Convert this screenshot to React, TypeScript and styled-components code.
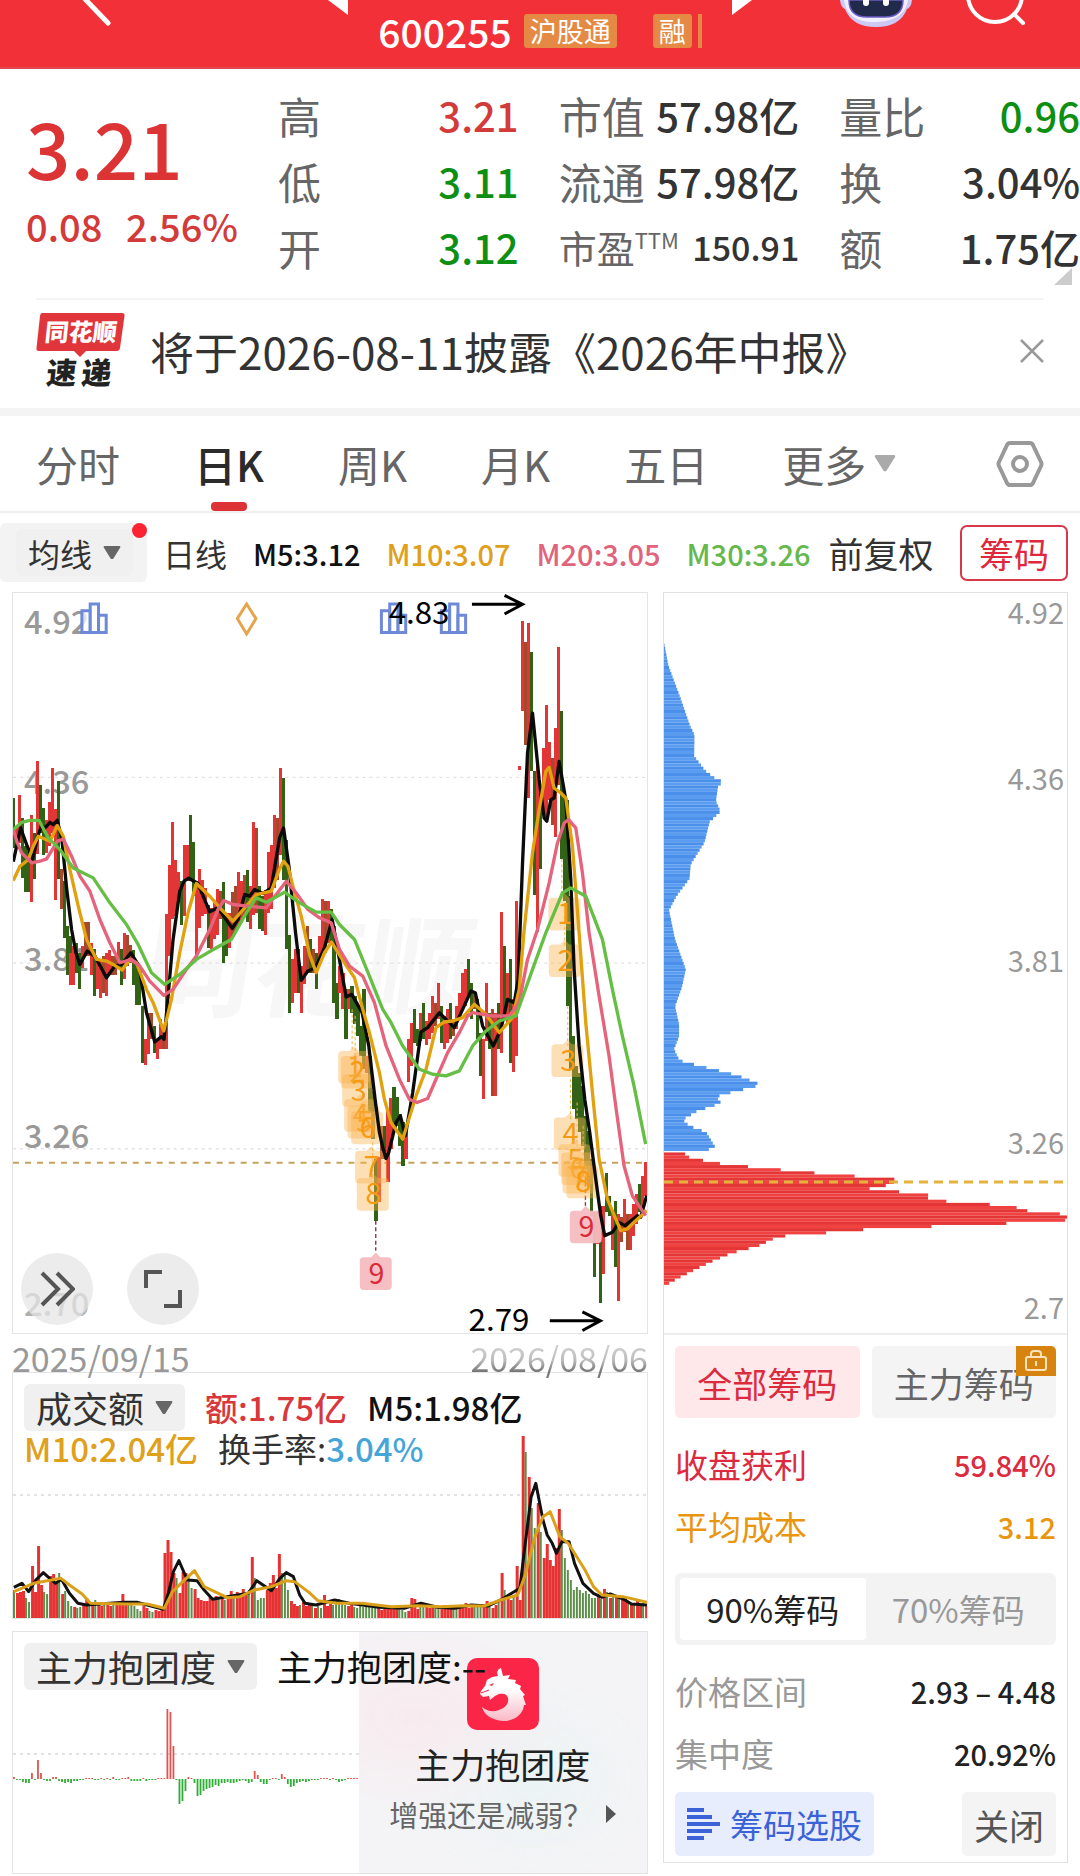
import React, { useState } from "react";
import styled, { createGlobalStyle } from "styled-components";

const GlobalStyle = createGlobalStyle`
  * {
    box-sizing: border-box;
  }

  body {
    margin: 0;
    background: #fff;
    color: #333;
    font-family: "Noto Sans CJK SC", "Noto Sans", sans-serif;
  }

  button, select {
    font-family: inherit;
    border: 0;
    padding: 0;
    margin: 0;
    background: none;
    color: inherit;
    cursor: pointer;
  }

  svg {
    display: block;
  }
`;

type Point = [number, number];
type Candle = [number, number, number, "r" | "g" | "m"];

const RED = "#e23535";
const GREEN = "#316216";
const CANDLE_COLORS = { r: RED, g: GREEN, m: "#a5492c" };

/* ---------- data ---------- */

// x, high, low, direction
const candles: Candle[] = [
  [36, 656, 805, "g"], [45, 740, 800, "r"], [54, 647, 790, "r"], [63, 715, 895, "g"], [72, 800, 937, "g"],
  [81, 815, 937, "g"], [90, 707, 966, "r"], [99, 760, 897, "g"], [108, 545, 822, "r"], [117, 615, 760, "g"],
  [126, 686, 826, "g"], [135, 722, 820, "r"], [144, 668, 800, "r"], [153, 566, 760, "r"], [162, 687, 962, "r"],
  [171, 605, 897, "g"], [180, 868, 988, "m"], [189, 905, 1077, "g"], [198, 1040, 1188, "g"], [207, 1070, 1190, "g"],
  [208, 1120, 1218, "r"], [217, 1100, 1218, "r"], [226, 1090, 1180, "g"], [235, 1120, 1228, "g"], [244, 1100, 1167, "r"],
  [253, 1027, 1130, "m"], [262, 1027, 1130, "m"], [271, 1090, 1187, "r"], [280, 1110, 1249, "g"], [289, 1140, 1230, "r"],
  [298, 1140, 1257, "r"], [307, 1130, 1240, "m"], [316, 1120, 1249, "r"], [325, 1112, 1187, "r"], [334, 1130, 1187, "m"],
  [343, 1130, 1187, "m"], [352, 1088, 1165, "r"], [361, 1110, 1218, "g"], [370, 1060, 1200, "r"], [379, 1068, 1160, "m"],
  [388, 1097, 1150, "m"], [397, 1112, 1218, "g"], [406, 1150, 1278, "g"], [415, 1160, 1278, "g"], [424, 1280, 1450, "g"],
  [433, 1380, 1458, "r"], [442, 1300, 1425, "r"], [451, 1300, 1380, "m"], [460, 1340, 1420, "g"], [469, 1380, 1440, "r"],
  [478, 1320, 1410, "r"], [487, 1340, 1410, "m"], [495, 1005, 1410, "r"], [504, 855, 1130, "r"], [513, 728, 1020, "r"],
  [522, 840, 1010, "r"], [531, 878, 960, "r"], [540, 905, 1038, "g"], [549, 797, 1010, "r"], [558, 797, 905, "r"],
  [567, 707, 905, "g"], [576, 788, 950, "g"], [585, 905, 1135, "r"], [594, 868, 1045, "r"], [603, 900, 1010, "r"],
  [612, 925, 1005, "r"], [621, 975, 1105, "g"], [630, 985, 1110, "r"], [639, 970, 1080, "r"], [648, 928, 1068, "r"],
  [657, 935, 1020, "m"], [666, 908, 1150, "g"], [675, 1000, 1130, "g"], [684, 1000, 1105, "r"], [693, 938, 1077, "m"],
  [702, 918, 1058, "m"], [711, 878, 1040, "r"], [720, 905, 1030, "r"], [729, 885, 1010, "m"], [738, 870, 1028, "g"],
  [747, 920, 1048, "r"], [756, 728, 1008, "r"], [765, 745, 1000, "m"], [774, 920, 1048, "g"], [783, 950, 1055, "g"],
  [792, 930, 1068, "r"], [801, 818, 1000, "r"], [810, 797, 990, "r"], [819, 707, 925, "r"], [828, 715, 900, "m"],
  [837, 566, 825, "r"], [846, 596, 900, "g"], [855, 780, 1108, "g"], [864, 1068, 1300, "g"], [873, 1140, 1270, "r"],
  [882, 1108, 1240, "r"], [891, 1110, 1240, "g"], [900, 1160, 1300, "r"], [909, 1100, 1215, "r"], [918, 1040, 1180, "m"],
  [927, 1080, 1180, "g"], [936, 1108, 1180, "m"], [945, 1120, 1228, "g"], [954, 1070, 1150, "r"], [963, 958, 1130, "r"],
  [972, 965, 1120, "m"], [981, 965, 1090, "r"], [990, 990, 1090, "g"], [999, 1040, 1270, "g"], [1008, 1210, 1320, "g"],
  [1017, 1160, 1240, "r"], [1026, 1180, 1288, "r"], [1035, 1230, 1380, "g"], [1044, 1230, 1288, "r"], [1053, 1220, 1300, "g"],
  [1062, 1250, 1335, "g"], [1071, 1280, 1370, "g"], [1080, 1340, 1430, "g"], [1089, 1228, 1470, "g"], [1098, 1430, 1480, "r"],
  [1107, 1430, 1600, "g"], [1116, 1535, 1680, "g"], [1125, 1740, 1925, "g"], [1134, 1735, 1870, "r"], [1143, 1640, 1740, "m"],
  [1152, 1640, 1740, "g"], [1161, 1590, 1810, "r"], [1170, 1555, 1710, "r"], [1179, 1522, 1640, "g"], [1188, 1552, 1640, "g"],
  [1197, 1605, 1700, "g"], [1206, 1630, 1760, "g"], [1215, 1655, 1740, "r"], [1223, 1380, 1508, "r"], [1232, 1330, 1460, "r"],
  [1241, 1290, 1390, "g"], [1250, 1350, 1400, "g"], [1259, 1300, 1385, "r"], [1268, 1270, 1380, "g"], [1277, 1325, 1397, "r"],
  [1286, 1300, 1380, "r"], [1295, 1250, 1360, "r"], [1304, 1270, 1340, "m"], [1313, 1210, 1320, "r"], [1322, 1280, 1390, "g"],
  [1331, 1310, 1410, "r"], [1340, 1290, 1390, "r"], [1349, 1270, 1380, "g"], [1358, 1320, 1370, "m"], [1367, 1280, 1350, "r"],
  [1376, 1240, 1320, "r"], [1385, 1180, 1290, "r"], [1394, 1168, 1280, "r"], [1403, 1138, 1250, "g"], [1412, 1210, 1320, "g"],
  [1421, 1240, 1290, "m"], [1430, 1260, 1380, "g"], [1439, 1360, 1490, "g"], [1448, 1380, 1560, "r"], [1457, 1210, 1385, "r"],
  [1466, 1300, 1410, "g"], [1475, 1290, 1550, "m"], [1484, 1300, 1550, "r"], [1493, 1270, 1410, "g"], [1502, 997, 1420, "r"],
  [1511, 1100, 1320, "g"], [1520, 1180, 1330, "r"], [1529, 1140, 1450, "g"], [1538, 1260, 1478, "r"], [1547, 963, 1430, "r"],
  [1556, 560, 570, "r"], [1565, 123, 393, "r"], [1574, 185, 495, "m"], [1583, 128, 655, "r"], [1592, 215, 575, "g"],
  [1601, 575, 945, "g"], [1610, 545, 1058, "r"], [1619, 640, 868, "g"], [1628, 505, 700, "r"], [1637, 375, 720, "r"],
  [1646, 486, 660, "r"], [1655, 535, 735, "m"], [1664, 445, 773, "r"], [1673, 202, 615, "r"], [1682, 395, 838, "g"],
  [1691, 640, 965, "g"], [1700, 660, 1280, "g"], [1709, 950, 1470, "g"], [1718, 1370, 1590, "g"], [1727, 1460, 1620, "g"],
  [1736, 1480, 1660, "g"], [1745, 1520, 1700, "g"], [1754, 1610, 1770, "g"], [1763, 1655, 1820, "g"], [1772, 1740, 1910, "g"],
  [1781, 1900, 2095, "g"], [1790, 1900, 1995, "r"], [1799, 1880, 2172, "g"], [1808, 1880, 2085, "r"], [1817, 1782, 1900, "g"],
  [1826, 1850, 1910, "g"], [1835, 1900, 2012, "r"], [1844, 1865, 2065, "g"], [1853, 1905, 2165, "r"], [1862, 1915, 1990, "m"],
  [1871, 1860, 1960, "r"], [1880, 1905, 2012, "m"], [1889, 1905, 2012, "r"], [1898, 1875, 1970, "r"], [1907, 1845, 1935, "r"],
  [1916, 1815, 1900, "g"], [1925, 1790, 1900, "r"], [1934, 1750, 1850, "r"],
];

const priceLines = [
  {
    color: "#0b0b0b",
    points:
      "40,846 52,790 62,745 80,795 98,838 115,765 125,738 135,745 150,728 160,735 172,722 186,780 200,925 215,1050 228,1120 240,1155 262,1115 285,1130 320,1195 345,1160 365,1155 393,1120 418,1160 440,1300 465,1388 485,1372 493,1380 505,1250 520,1080 540,935 553,905 567,896 595,912 630,997 655,985 698,1047 715,1020 735,945 750,950 765,930 790,942 815,925 840,775 852,745 868,860 888,1060 905,1203 925,1175 948,1165 975,1105 998,1020 1010,1085 1040,1253 1057,1245 1088,1300 1108,1400 1127,1560 1140,1660 1150,1705 1160,1738 1168,1720 1190,1630 1203,1610 1218,1670 1240,1540 1265,1358 1285,1345 1320,1300 1365,1345 1390,1290 1415,1235 1428,1240 1450,1340 1482,1400 1505,1350 1525,1260 1545,1270 1557,1200 1570,850 1585,520 1600,400 1620,600 1635,715 1643,725 1655,660 1665,655 1680,545 1700,660 1715,900 1725,1170 1740,1400 1757,1560 1772,1660 1790,1800 1805,1910 1817,1970 1840,1960 1860,1930 1878,1940 1915,1910 1925,1915 1943,1850",
  },
  {
    color: "#e2a10e",
    points:
      "40,903 60,860 85,840 100,800 115,770 150,785 172,738 190,770 210,870 235,980 260,1080 290,1140 320,1145 340,1155 367,1172 390,1140 410,1150 440,1230 460,1270 492,1355 515,1260 540,1120 565,1000 590,912 630,950 665,990 700,1025 740,980 770,945 815,935 840,868 852,845 865,860 880,920 905,1010 930,1125 950,1180 975,1120 996,1088 1035,1150 1065,1195 1090,1290 1110,1360 1140,1480 1155,1560 1175,1630 1210,1680 1250,1550 1280,1470 1310,1345 1335,1328 1360,1325 1390,1315 1425,1275 1460,1305 1500,1360 1540,1315 1560,1230 1575,1050 1600,820 1620,690 1640,575 1650,563 1665,625 1685,640 1700,655 1720,800 1740,1060 1760,1330 1782,1560 1800,1740 1825,1860 1865,1955 1885,1950 1910,1925 1943,1895",
  },
  {
    color: "#e5647c",
    points:
      "40,750 52,790 65,820 95,850 120,845 140,838 172,785 190,778 215,830 240,890 270,935 300,1020 330,1090 360,1150 395,1140 420,1160 450,1205 492,1248 520,1230 560,1170 590,1130 630,1050 655,990 672,963 700,975 745,980 800,985 860,905 890,940 925,990 960,1015 995,1030 1020,1110 1050,1160 1090,1190 1125,1270 1160,1400 1200,1500 1230,1560 1253,1570 1285,1558 1310,1500 1345,1420 1380,1360 1405,1310 1420,1300 1480,1310 1530,1310 1560,1270 1585,1140 1615,1050 1650,910 1675,790 1695,730 1708,720 1730,745 1750,880 1770,1060 1800,1250 1830,1430 1850,1580 1875,1760 1900,1850 1940,1910",
  },
  {
    color: "#66bf45",
    points:
      "40,750 65,728 90,722 117,722 145,775 180,810 220,865 280,895 330,970 380,1035 415,1095 455,1180 495,1215 540,1185 590,1140 650,1105 695,1080 740,1000 770,955 800,968 855,938 900,970 950,998 995,998 1020,1035 1065,1080 1110,1190 1150,1290 1175,1330 1210,1400 1260,1470 1300,1485 1340,1490 1380,1475 1420,1400 1460,1355 1500,1325 1550,1310 1600,1170 1640,1060 1690,940 1715,925 1760,950 1810,1080 1840,1230 1870,1370 1905,1520 1940,1695",
  },
];

const axisLabels: { text: string; y: number; faded?: boolean }[] = [
  { text: "4.92", y: 162 },
  { text: "4.36", y: 643 },
  { text: "3.81", y: 1174 },
  { text: "3.26", y: 1707 },
  { text: "2.70", y: 2210, faded: true },
];

const turnMarks: [number, number, string][] = [
  [1064, 1460, "1"], [1072, 1475, "2"], [1076, 1530, "3"], [1082, 1605, "4"], [1092, 1625, "5"],
  [1103, 1642, "6"], [1115, 1760, "7"], [1120, 1842, "8"], [1696, 1000, "1"], [1697, 1140, "2"],
  [1705, 1440, "3"], [1712, 1660, "4"], [1726, 1740, "5"], [1734, 1765, "6"], [1738, 1790, "7"], [1750, 1805, "8"],
];

const turnover =
  "28g 25r 26r 27r 20g 16g 52r 26r 72r 33r 26g 24g 42r 44r 35r 45g 24r 27g 17g 12g 11r 10g 11g 14r 20r 15g 13r 18g 13r 12r 14g 16r 12r 13g 15r 13r 24r 14r 13g 15g 12g 9g 7g 12r 10r 7g 6g 8r 7r 9r 65r 78r 66r 45r 40g 25r 46r 45r 41g 30g 29r 20r 18r 17r 17r 21r 20r 22r 21g 24r 18g 19r 27r 22g 26r 22r 29r 25r 28g 61r 40g 18g 20g 20g 28r 35r 43r 30r 64r 45g 45g 28g 17r 14r 12r 13g 16r 12r 13r 14g 10r 12g 10g 23r 12r 14r 13g 16g 19g 14g 13g 12r 14r 11g 10g 12g 11g 13g 15g 10g 12g 11r 8r 9r 13r 9r 12r 11r 9g 8g 6g 7r 20r 19r 9r 12g 15g 14r 10r 13r 11g 12g 11r 13r 10r 9r 11g 10g 12r 13r 15r 10r 12r 13g 14g 11g 12r 17r 14g 10r 13r 16g 45r 28g 20r 18r 22g 52r 18r 182r 166g 141r 110g 90g 115r 86g 60r 74r 58r 52r 70r 109r 88g 60g 48g 38g 28g 31g 28g 25g 27g 24g 20g 20g 23r 19g 29r 26g 20r 22g 21r 22g 18r 21r 16g 14r 15g 17r 13r 15g 14r"
    .split(" ")
    .map((v) => ({ height: parseInt(v, 10), up: v.endsWith("r") }));

const turnoverLines = [
  {
    color: "#111",
    points:
      "33,652 52,640 68,665 85,630 103,608 118,625 132,640 146,628 165,670 185,700 205,705 260,700 295,697 325,697 388,718 400,670 412,605 425,572 445,630 468,632 485,660 505,688 540,680 590,670 610,632 645,662 665,625 680,608 697,620 712,675 725,700 750,705 795,690 830,700 900,712 960,715 1000,700 1040,712 1080,715 1120,705 1160,708 1190,690 1235,655 1248,520 1262,380 1273,340 1290,450 1300,495 1312,520 1322,550 1335,515 1352,515 1365,580 1385,640 1410,670 1430,682 1450,672 1485,690 1500,702 1537,705",
  },
  {
    color: "#dba01a",
    points:
      "33,665 80,640 145,625 165,645 195,672 215,700 300,702 350,702 390,715 410,665 430,640 462,602 485,650 540,683 570,680 605,660 645,650 680,632 700,635 735,668 755,692 800,700 860,700 930,710 990,707 1050,710 1100,707 1150,708 1190,690 1230,675 1248,615 1270,505 1290,440 1307,425 1330,500 1350,520 1390,600 1410,650 1430,675 1480,680 1537,697",
  },
];

const clusterFlow = [
  2, -1, -1, -3, -4, -4, 6, -1, 19, 6, -1, -2, -2, 2, 2, -2, -3, -4, -3, -4, -2, -2, -1, -1, 1, 1, 1, -1, -1, 1, -1, 1,
  -1, 2, -1, -1, 1, 1, 2, -2, -2, -2, -2, 1, -2, -1, -1, -1, 1, 1, 1, 70, 67, 33, -1, -25, -22, -12, 2, 1, -4, -17, -16,
  -12, -10, -9, -8, -6, -7, -4, -4, -3, -4, -4, -3, -2, -1, -2, -4, -3, 8, 4, -3, -5, -5, -1, 1, 1, -1, 5, 2, -5, -8,
  -7, -4, -3, -2, -3, -2, -1, -1, -1, 1, 1, 1, -1, 1, -1, -3, -2, -1, 1, 1, 1, 1,
];

const trappedProfile: Point[] = [
  [0, 127], [13, 175], [48, 240], [78, 300], [91, 318], [90, 362], [123, 392], [153, 408], [180, 416], [162, 422],
  [155, 455], [169, 476], [136, 498], [121, 540], [80, 585], [76, 615], [38, 650], [15, 680], [33, 740], [65, 802],
  [53, 840], [33, 878], [45, 915], [45, 940], [30, 967], [45, 988], [63, 994], [103, 1000], [140, 1007], [176, 1013],
  [214, 1020], [240, 1026], [264, 1033], [290, 1040], [256, 1047], [223, 1052], [190, 1058], [156, 1065], [171, 1078],
  [140, 1085], [98, 1095], [56, 1112], [76, 1125], [126, 1138], [154, 1170], [108, 1178],
];

const profitProfile: Point[] = [
  [63, 1183], [76, 1190], [123, 1197], [171, 1203], [264, 1210], [356, 1216], [449, 1222], [578, 1229], [706, 1236],
  [662, 1248], [610, 1255], [717, 1262], [795, 1268], [787, 1275], [848, 1281], [993, 1288], [1058, 1294], [1089, 1301],
  [1190, 1307], [1209, 1314], [1194, 1321], [953, 1328], [747, 1334], [564, 1340], [462, 1347], [342, 1353], [298, 1367],
  [280, 1373], [203, 1387], [138, 1406], [103, 1418], [45, 1438], [4, 1454],
];

// one horizontal bar for every price step of the profile
const toBars = (profile: Point[]) => {
  const bars: { y: number; width: number }[] = [];
  let k = 0;
  for (let y = profile[0][1]; y <= profile[profile.length - 1][1]; y += 6.5) {
    while (k < profile.length - 2 && profile[k + 1][1] <= y) k++;
    const [x0, y0] = profile[k];
    const [x1, y1] = profile[k + 1];
    const t = Math.min(1, (y - y0) / (y1 - y0));
    bars.push({ y, width: x0 + (x1 - x0) * t });
  }
  return bars;
};

/* ---------- header ---------- */

const Header = styled.header`
  display: grid;
  grid-template-columns: 1fr auto 1fr;
  align-items: start;
  height: 69px;
  overflow: hidden;
  background: #f13038;
  border-bottom: 2px solid #de4a50;
`;

const HeaderSide = styled.div<{ $end?: boolean }>`
  display: flex;
  align-items: flex-start;
  justify-content: ${(props) => (props.$end ? "flex-end" : "flex-start")};
  gap: 54px;
  padding: ${(props) => (props.$end ? "0 54px 0 0" : "0 0 0 80px")};
`;

const StockSwitch = styled.div`
  display: flex;
  align-items: flex-start;
  gap: 30px;
`;

const StockCode = styled.div`
  display: flex;
  align-items: center;
  gap: 12px;
  height: 62px;
  color: #fff;
  font-size: 39px;
  font-weight: 500;
  line-height: 48px;
`;

const MarketTag = styled.span<{ $last?: boolean }>`
  padding: 0 6px;
  margin-left: ${(props) => (props.$last ? "24px" : "0")};
  border-radius: 3px;
  background: #e58a45;
  font-size: 27px;
  font-weight: 400;
  line-height: 34px;
`;

const TagSliver = styled.span`
  width: 4px;
  height: 34px;
  margin-left: -6px;
  background: #e58a45;
`;

/* ---------- quote ---------- */

const Quote = styled.section`
  position: relative;
  display: grid;
  grid-template-columns: 212px 1fr 1fr 1fr;
  column-gap: 40px;
  padding: 13px 0 18px 26px;
`;

const PriceBlock = styled.div`
  padding-top: 20px;
  color: #dc3434;
`;

const LastPrice = styled.div`
  font-size: 78px;
  font-weight: 500;
  line-height: 88px;
`;

const Change = styled.div`
  display: flex;
  justify-content: space-between;
  margin-top: 11px;
  font-size: 38px;
  font-weight: 500;
  line-height: 50px;
  color: #d33a3a;
`;

const StatList = styled.dl`
  margin: 0;
`;

const Stat = styled.div`
  display: flex;
  align-items: center;
  justify-content: space-between;
  height: 66px;
  white-space: nowrap;
`;

const StatName = styled.dt<{ $small?: boolean }>`
  display: flex;
  color: #666;
  font-size: ${(props) => (props.$small ? "38px" : "43px")};
  line-height: 60px;

  sup {
    font-size: 22px;
    line-height: 44px;
  }
`;

const StatValue = styled.dd<{ $tone?: string; $small?: boolean }>`
  margin: 0;
  color: ${(props) => props.$tone || "#333"};
  font-size: ${(props) => (props.$small ? "34px" : "40px")};
  font-weight: 500;
  line-height: 60px;
`;

const CornerMark = styled.svg`
  position: absolute;
  right: 8px;
  bottom: 13px;
`;

/* ---------- news ---------- */

const News = styled.section`
  display: flex;
  align-items: center;
  height: 110px;
  margin: 0 36px;
  padding-bottom: 6px;
  border-top: 2px solid #f4f4f4;
`;

const NewsText = styled.a`
  flex: 1;
  margin-left: 24px;
  color: #333;
  font-size: 44px;
  line-height: 60px;
  text-decoration: none;
  white-space: nowrap;
`;

const Band = styled.div`
  height: 8px;
  background: #f4f4f4;
`;

/* ---------- tabs ---------- */

const Tabs = styled.nav`
  display: flex;
  align-items: center;
  gap: 74px;
  height: 97px;
  padding: 0 36px;
  border-bottom: 2px solid #f0f0f0;
`;

const Tab = styled.button<{ $active?: boolean }>`
  position: relative;
  display: flex;
  align-items: center;
  gap: 8px;
  height: 95px;
  color: ${(props) => (props.$active ? "#2b2b2b" : "#666")};
  font-size: 42px;
  font-weight: ${(props) => (props.$active ? 500 : 400)};
  white-space: nowrap;

  &::after {
    content: "";
    display: ${(props) => (props.$active ? "block" : "none")};
    position: absolute;
    left: 50%;
    bottom: 0;
    width: 36px;
    height: 9px;
    margin-left: -18px;
    border-radius: 4px;
    background: #dd3236;
  }
`;

const SettingsButton = styled.button`
  margin-left: auto;
`;

/* ---------- averages ---------- */

const AverageBar = styled.div`
  display: flex;
  align-items: center;
  height: 79px;
  padding-right: 12px;
  white-space: nowrap;
`;

const AverageChip = styled.div`
  position: relative;
  padding: 6px 14px 6px 16px;
  border-radius: 6px;
  background: #f3f3f3;
`;

const RedDot = styled.span`
  position: absolute;
  top: 0;
  right: 0;
  width: 15px;
  height: 15px;
  border-radius: 50%;
  background: #fb2334;
`;

const SelectBox = styled.label`
  display: inline-flex;
  align-items: center;
  gap: 10px;
  height: 47px;
  padding: 0 12px;
  border-radius: 6px;
  background: #f0f0f0;
`;

const Select = styled.select<{ $size: number }>`
  appearance: none;
  outline: none;
  color: #333;
  font-size: ${(props) => props.$size}px;
  line-height: 46px;
`;

const Legend = styled.div`
  display: flex;
  align-items: center;
  gap: 26px;
  margin: 0 18px 0 16px;
  font-size: 29px;
  font-weight: 500;
`;

const LegendItem = styled.span<{ $color: string }>`
  color: ${(props) => props.$color};
`;

const PeriodName = styled.span`
  color: #333;
  font-size: 32px;
  font-weight: 400;
`;

const AdjustMode = styled.button`
  color: #333;
  font-size: 35px;
`;

const ChipToggle = styled.button`
  height: 56px;
  margin-left: auto;
  padding: 0 17px;
  border: 2px solid #d8384c;
  border-radius: 7px;
  color: #e0283c;
  font-size: 35px;
  line-height: 50px;
`;

/* ---------- charts ---------- */

const Charts = styled.main`
  display: grid;
  grid-template-columns: minmax(0, 636fr) minmax(0, 405fr);
  column-gap: 15px;
  align-items: start;
  padding: 0 12px 3px;
`;

const Panel = styled.section`
  display: grid;
  border: 1px solid #e4e4e4;

  > * {
    grid-area: 1 / 1;
  }
`;

const Drawing = styled.svg`
  width: 100%;
  height: auto;
  font-family: "Noto Sans CJK SC", sans-serif;
`;

const ChartTools = styled.div`
  display: flex;
  align-self: end;
  gap: 34px;
  padding: 0 0 8px 8px;
  z-index: 1;
`;

const RoundButton = styled.button`
  display: grid;
  place-items: center;
  width: 72px;
  height: 72px;
  border-radius: 50%;
  background: rgba(228, 228, 228, 0.72);
`;

const DateAxis = styled.div`
  display: flex;
  justify-content: space-between;
  height: 38px;
  color: #999;
  font-size: 34px;
  line-height: 48px;
`;

const EndDate = styled.span`
  height: 48px;
  color: #777;
  mask-image: linear-gradient(to bottom, rgba(0, 0, 0, 0.35) 28%, rgba(0, 0, 0, 0.5) 55%, #000 78%);
`;

const Indicator = styled.div`
  display: flex;
  flex-wrap: wrap;
  align-content: flex-start;
  align-items: center;
  column-gap: 20px;
  padding: 11px 11px 0;
  z-index: 1;
  font-size: 33px;
  line-height: 34px;
  white-space: nowrap;
`;

const IndicatorValue = styled.span<{ $color?: string }>`
  color: ${(props) => props.$color || "#111"};
  font-weight: 500;

  em {
    color: #333;
    font-style: normal;
    font-weight: 400;
  }
`;

const ClusterTitle = styled.span`
  color: #111;
  font-size: 35px;
`;

const ClusterPanel = styled(Panel)`
  margin-top: 12px;
`;

const Promo = styled.a`
  display: flex;
  flex-direction: column;
  align-items: center;
  justify-self: end;
  width: 45.5%;
  padding-top: 26px;
  background:
    radial-gradient(ellipse at 20% 35%, rgba(250, 230, 235, 0.7), transparent 45%),
    radial-gradient(ellipse at 60% 62%, rgba(232, 243, 243, 0.7), transparent 50%),
    #f4f4f6;
  color: #222;
  text-decoration: none;
  white-space: nowrap;
`;

const PromoTitle = styled.strong`
  margin-top: 11px;
  font-size: 35px;
  font-weight: 400;
  line-height: 46px;
`;

const PromoNote = styled.span`
  display: flex;
  align-items: center;
  gap: 14px;
  margin-top: 7px;
  color: #666;
  font-size: 29px;
  line-height: 40px;
`;

/* ---------- chip distribution ---------- */

const ChipColumn = styled.aside`
  border: 1px solid #e0e0e0;
`;

const ChipDetails = styled.div`
  padding: 11px 11px 6px;
  border-top: 2px solid #eee;
`;

const ChipTabs = styled.div`
  display: grid;
  grid-template-columns: 1fr 1fr;
  gap: 12px;
  margin-bottom: 15px;
`;

const ChipTab = styled.button<{ $active?: boolean }>`
  position: relative;
  height: 72px;
  border-radius: 5px;
  background: ${(props) => (props.$active ? "#fee8ea" : "#f4f4f4")};
  color: ${(props) => (props.$active ? "#dc2a3f" : "#666")};
  font-size: 35px;
`;

const LockBadge = styled.span`
  position: absolute;
  top: 0;
  right: 0;
  display: grid;
  place-items: center;
  width: 40px;
  height: 30px;
  border-radius: 0 5px 0 0;
  background: #d6830f;
`;

const Facts = styled.dl`
  margin: 0;
`;

const Fact = styled.div<{ $color?: string }>`
  display: flex;
  align-items: center;
  justify-content: space-between;
  height: 62px;
  color: ${(props) => props.$color || "#999"};

  dt {
    font-size: 33px;
  }

  dd {
    margin: 0;
    color: ${(props) => props.$color || "#222"};
    font-size: 29px;
    font-weight: 500;
  }
`;

const Segment = styled.div`
  display: grid;
  grid-template-columns: 1fr 1fr;
  margin: 16px 0 15px;
  padding: 5px;
  border-radius: 6px;
  background: #f3f3f3;
`;

const SegmentButton = styled.button<{ $active: boolean }>`
  height: 62px;
  border-radius: 4px;
  background: ${(props) => (props.$active ? "#fff" : "transparent")};
  color: ${(props) => (props.$active ? "#222" : "#999")};
  font-size: 33px;
`;

const ChipActions = styled.div`
  display: flex;
  justify-content: space-between;
  margin-top: 8px;
`;

const ChipAction = styled.button<{ $primary?: boolean }>`
  display: flex;
  align-items: center;
  gap: 10px;
  height: 64px;
  padding: 0 12px;
  border-radius: 5px;
  background: ${(props) => (props.$primary ? "#e8edfe" : "#f4f4f4")};
  color: ${(props) => (props.$primary ? "#3c62d8" : "#555")};
  font-size: ${(props) => (props.$primary ? "33px" : "35px")};
`;

/* ---------- parts ---------- */

const DownArrow = ({ color = "#666", size = 18 }: { color?: string; size?: number }) => (
  <svg width={size} height={size * 0.75} viewBox="0 0 20 15" aria-hidden="true">
    <path d="M2 0h16q2 0 1 2L11.500 14q-1.500 1.600-3 0L1 2Q0 0 2 0Z" fill={color} />
  </svg>
);

interface DropdownProps {
  label: string;
  value: string;
  size?: number;
}

const Dropdown = ({ label, value, size = 36 }: DropdownProps) => (
  <SelectBox>
    <Select $size={size} aria-label={label} defaultValue={value}>
      <option>{value}</option>
    </Select>
    <DownArrow />
  </SelectBox>
);

const ExpressLogo = () => (
  <svg width="90" height="76" viewBox="0 0 90 76" fontFamily="Noto Sans CJK SC, sans-serif" fontWeight="900">
    <path d="M6 0h80q3 0 2.500 3L84 35q-.5 3-3.500 3H50l-6 6-6-6H3q-3 0-2.500-3L4 3q.4-3 2-3Z" fill="#e0363b" />
    <text x="11" y="28" fontSize="24" fill="#fff" transform="skewX(-6)">同花顺</text>
    <text x="17" y="71" fontSize="30" fill="#222" transform="skewX(-6)">速</text>
    <text x="52" y="71" fontSize="30" fill="#222" transform="skewX(-6)">递</text>
  </svg>
);

const Badge = ({ x, y, text, last }: { x: number; y: number; text: string; last?: boolean }) => (
  <g>
    <path
      d={`M${x - 36} ${y - 45}h22l14-14 14 14h22q12 0 12 12v74q0 12-12 12h-72q-12 0-12-12v-74q0-12 12-12Z`}
      fill={last ? "#f6bcc0" : "#fbb24f"}
      fillOpacity={last ? 0.95 : 0.42}
    />
    <text x={x + 2} y={y + 34} fontSize="86" textAnchor="middle" fill={last ? "#d92c38" : "#f59a12"}>
      {text}
    </text>
  </g>
);

const ReportIcon = ({ x }: { x: number }) => (
  <g fill="#fff" fillOpacity="0.7" stroke="#6d89d8" strokeWidth="9">
    <path d={`M${x + 4} 92h25v66h-25Z`} />
    <path d={`M${x + 29} 72h25v86h-25Z`} />
    <path d={`M${x + 54} 106h23v52h-23Z`} />
  </g>
);

const PriceChart = () => (
  <Drawing viewBox="39 39 1905 2223" role="img" aria-label="日K">
    <text x="420" y="1285" fontSize="330" fontWeight="700" fill="#f7f7f7" transform="translate(200 0) skewX(-9)">
      同花顺
    </text>
    <g stroke="#e2e2e2" strokeWidth="4" strokeDasharray="9 12">
      <path d="M39 593H1944" />
      <path d="M39 1151H1944" />
      <path d="M39 1709H1944" />
    </g>
    <path d="M39 1751H1944" stroke="#c6a35d" strokeWidth="6" strokeDasharray="18 18" />
    {axisLabels.map((label) => (
      <text key={label.text} x="72" y={label.y} fontSize="98" fontWeight="500" fill={label.faded ? "#b0b0b0" : "#999"}>
        {label.text}
      </text>
    ))}
    <ReportIcon x={242} />
    <ReportIcon x={1142} />
    <ReportIcon x={1322} />
    <path d="M741 72l28 44-28 46-28-46Z" fill="none" stroke="#e5a54c" strokeWidth="9" />
    <g shapeRendering="crispEdges">
      {candles.map(([x, high, low, tone]) => (
        <rect key={x} x={x} y={high} width="9.5" height={low - high} fill={CANDLE_COLORS[tone]} />
      ))}
    </g>
    <g stroke="#efb44d" strokeWidth="3" strokeDasharray="9 7">
      <path d="M1058 1290V1410" />
      <path d="M1067 1310V1430" />
      <path d="M1120 1690V1800" />
      <path d="M1688 838V960" />
      <path d="M1697 1010V1100" />
      <path d="M1706 1280V1400" />
      <path d="M1714 1500V1620" />
      <path d="M1734 1570V1700" />
      <path d="M1752 1640V1800" />
    </g>
    <g stroke="#8c2b3a" strokeWidth="4" strokeDasharray="12 8">
      <path d="M1129 1925V2015" />
      <path d="M1759 1770V1880" />
    </g>
    {turnMarks.map(([x, y, text]) => (
      <Badge key={`${x}-${text}`} x={x} y={y} text={text} />
    ))}
    <Badge x={1129} y={2080} text="9" last />
    <Badge x={1760} y={1940} text="9" last />
    {priceLines.map((line) => (
      <polyline key={line.color} points={line.points} fill="none" stroke={line.color} strokeWidth="10" strokeLinejoin="round" />
    ))}
    <g fill="none" stroke="#000" strokeWidth="9">
      <path d="M1418 73h150M1516 46l54 27-54 29" />
      <path d="M1652 2226h150M1750 2199l54 27-54 29" />
    </g>
    <text x="1168" y="132" fontSize="94" fill="#000">4.83</text>
    <text x="1408" y="2256" fontSize="94" fill="#000">2.79</text>
  </Drawing>
);

const TurnoverChart = () => (
  <Drawing viewBox="0 0 634 245" role="img" aria-label="成交额">
    <path d="M0 122H634" stroke="#e2e2e2" strokeWidth="2" strokeDasharray="3 4" />
    {turnover.map((bar, i) => (
      <rect
        key={i}
        x={i * 3.01}
        y={245 - bar.height}
        width={bar.up ? 3 : 2}
        height={bar.height}
        fill={bar.up ? "#e63232" : "#5d8f4b"}
      />
    ))}
    <g transform="translate(-13 -3) scale(0.4209 0.3333)" fill="none">
      {turnoverLines.map((line) => (
        <polyline
          key={line.color}
          points={line.points}
          stroke={line.color}
          strokeWidth="3"
          strokeLinejoin="round"
          vectorEffect="non-scaling-stroke"
        />
      ))}
    </g>
  </Drawing>
);

const ClusterChart = () => (
  <Drawing viewBox="0 0 634 241" role="img" aria-label="主力抱团度">
    <path d="M0 122H346" stroke="#e2e2e2" strokeWidth="2" strokeDasharray="3 4" />
    {clusterFlow.map((value, i) => (
      <rect
        key={i}
        x={i * 3.01}
        y={value > 0 ? 147 - value : 147}
        width="1.8"
        height={Math.abs(value)}
        fill={value > 0 ? "#e0554f" : "#2fae35"}
      />
    ))}
  </Drawing>
);

const profileLabels: [string, number][] = [
  ["4.92", 31], ["4.36", 197], ["3.81", 379], ["3.26", 561], ["2.7", 726],
];

const ChipChart = () => (
  <Drawing viewBox="0 0 403 740" role="img" aria-label="筹码分布">
    <g transform="translate(0 -12.5) scale(0.335 0.4847)">
      {toBars(trappedProfile).map((bar, i) => (
        <rect key={i} y={bar.y - 3} width={bar.width} height="6.6" fill={i % 2 ? "#5a9cf0" : "#4a8fea"} />
      ))}
      {toBars(profitProfile).map((bar, i) => (
        <rect key={i} y={bar.y - 3} width={bar.width} height="6.6" fill={i % 2 ? "#ef4241" : "#e43636"} />
      ))}
    </g>
    <path d="M0 589H400" stroke="#e5b23b" strokeWidth="3" strokeDasharray="9 6" />
    <g fontSize="29" fill="#999" textAnchor="end">
      {profileLabels.map(([text, y]) => (
        <text key={text} x="400" y={y}>{text}</text>
      ))}
    </g>
  </Drawing>
);

const DragonLogo = () => (
  <svg width="72" height="72" viewBox="0 0 72 72">
    <defs>
      <linearGradient id="dragon" x1="0" y1="0" x2="0" y2="1">
        <stop offset="0.4" stopColor="#fff" />
        <stop offset="1" stopColor="#f9b9c6" />
      </linearGradient>
    </defs>
    <rect width="72" height="72" rx="10" fill="#fa2547" />
    <path
      d="M34 10l2 8 7-1-2 4 8 1-1 3 6 3-1 3 5 6-2 1 3 9-2 0C56 57 47 63 36 63 25 62 17 57 15 49c6 5 12 5 17 3 7-2 10-7 9-12-1-4-4-5-9-4l-4 2-5 4-1-4-6 1-3-3 1-3 4-5 2-6 5-3 6-1c-2-4 0-7 3-8Z"
      fill="url(#dragon)"
    />
    <path d="M22 27l5-2-2 3Z" fill="#fa2547" />
    <path d="M14 35l8-3" stroke="#fa2547" strokeWidth="1" />
  </svg>
);

const LockIcon = () => (
  <svg width="24" height="22" viewBox="0 0 24 22" fill="none" stroke="#fbe3bd" strokeWidth="2">
    <rect x="2" y="7" width="20" height="13" rx="2" />
    <path d="M7 7V4q0-3 3-3h4q3 0 3 3v3M12 11v5" />
  </svg>
);

const averages = [
  { text: "M5:3.12", color: "#111" },
  { text: "M10:3.07", color: "#dfa01c" },
  { text: "M20:3.05", color: "#e0647c" },
  { text: "M30:3.26", color: "#66b84c" },
];

const periods = ["分时", "日K", "周K", "月K", "五日"];

const UP = "#d33a3a";
const DOWN = "#0c8f12";

const App = () => {
  const [period, setPeriod] = useState("日K");
  const [range, setRange] = useState("90%筹码");

  return (
    <>
      <GlobalStyle />
      <Header>
        <HeaderSide>
          <button aria-label="返回">
            <svg width="34" height="28" viewBox="0 0 34 28">
              <path d="M4-2l24 25" stroke="#fff" strokeWidth="5" strokeLinecap="round" />
            </svg>
          </button>
        </HeaderSide>
        <StockSwitch>
          <button aria-label="上一只">
            <svg width="20" height="15" viewBox="0 0 20 15"><path d="M0 0h20v15Z" fill="#fff" /></svg>
          </button>
          <StockCode>
            600255
            <MarketTag>沪股通</MarketTag>
            <MarketTag $last>融</MarketTag>
            <TagSliver />
          </StockCode>
          <button aria-label="下一只">
            <svg width="20" height="15" viewBox="0 0 20 15"><path d="M0 0h20L0 15Z" fill="#fff" /></svg>
          </button>
        </StockSwitch>
        <HeaderSide $end>
          <button aria-label="智能助手">
            <svg width="72" height="28" viewBox="0 0 72 28">
              <path d="M0 0h72q-1 8-5 9-7 18-31 18T5 9Q1 8 0 0Z" fill="#cdc9f4" />
              <path d="M4 0h64q-3 21-32 22T4 0Z" fill="#f0effc" />
              <path d="M9 0h54q0 17-18 17H27Q9 17 9 0Z" fill="#222a4c" stroke="#6a5bc4" strokeWidth="1.500" />
              <path d="M26-2v5M46-2v5" stroke="#fff" strokeWidth="6" strokeLinecap="round" />
            </svg>
          </button>
          <button aria-label="搜索">
            <svg width="60" height="28" viewBox="0 0 60 28" fill="none" stroke="#fff" strokeWidth="4">
              <circle cx="29" cy="-5" r="27" />
              <path d="M48 14l9 9" strokeLinecap="round" />
            </svg>
          </button>
        </HeaderSide>
      </Header>

      <Quote>
        <PriceBlock>
          <LastPrice>3.21</LastPrice>
          <Change>
            <span>0.08</span>
            <span>2.56%</span>
          </Change>
        </PriceBlock>
        <StatList>
          <Stat><StatName>高</StatName><StatValue $tone={UP}>3.21</StatValue></Stat>
          <Stat><StatName>低</StatName><StatValue $tone={DOWN}>3.11</StatValue></Stat>
          <Stat><StatName>开</StatName><StatValue $tone={DOWN}>3.12</StatValue></Stat>
        </StatList>
        <StatList>
          <Stat><StatName>市值</StatName><StatValue>57.98亿</StatValue></Stat>
          <Stat><StatName>流通</StatName><StatValue>57.98亿</StatValue></Stat>
          <Stat><StatName $small>市盈<sup>TTM</sup></StatName><StatValue $small>150.91</StatValue></Stat>
        </StatList>
        <StatList>
          <Stat><StatName>量比</StatName><StatValue $tone={DOWN}>0.96</StatValue></Stat>
          <Stat><StatName>换</StatName><StatValue>3.04%</StatValue></Stat>
          <Stat><StatName>额</StatName><StatValue>1.75亿</StatValue></Stat>
        </StatList>
        <CornerMark width="18" height="17" viewBox="0 0 18 17"><path d="M18 0v17H0Z" fill="#ccc" /></CornerMark>
      </Quote>

      <News>
        <ExpressLogo />
        <NewsText href="#news">将于2026-08-11披露《2026年中报》</NewsText>
        <button aria-label="关闭公告">
          <svg width="24" height="24" viewBox="0 0 24 24"><path d="M1 1l22 22M23 1L1 23" stroke="#999" strokeWidth="2.500" /></svg>
        </button>
      </News>
      <Band />

      <Tabs>
        {periods.map((name) => (
          <Tab key={name} $active={name === period} onClick={() => setPeriod(name)}>{name}</Tab>
        ))}
        <Tab>更多<DownArrow color="#aaa" size={22} /></Tab>
        <SettingsButton aria-label="设置">
          <svg width="48" height="46" viewBox="0 0 48 46" fill="none" stroke="#999" strokeWidth="4">
            <path d="M14 2h20q2 0 3 2l8 17q1 2 0 4l-8 17q-1 2-3 2H14q-2 0-3-2L3 25q-1-2 0-4l8-17q1-2 3-2Z" />
            <circle cx="24" cy="23" r="7" />
          </svg>
        </SettingsButton>
      </Tabs>

      <AverageBar>
        <AverageChip>
          <Dropdown label="主图指标" value="均线" size={32} />
          <RedDot />
        </AverageChip>
        <Legend>
          <PeriodName>日线</PeriodName>
          {averages.map((item) => (
            <LegendItem key={item.text} $color={item.color}>{item.text}</LegendItem>
          ))}
        </Legend>
        <AdjustMode>前复权</AdjustMode>
        <ChipToggle>筹码</ChipToggle>
      </AverageBar>

      <Charts>
        <div>
          <Panel>
            <PriceChart />
            <ChartTools>
              <RoundButton aria-label="展开">
                <svg width="36" height="36" viewBox="0 0 36 36" fill="none" stroke="#555" strokeWidth="4">
                  <path d="M3 2l16 16L3 34M18 2l16 16L18 34" />
                </svg>
              </RoundButton>
              <RoundButton aria-label="全屏">
                <svg width="38" height="38" viewBox="0 0 38 38" fill="none" stroke="#555" strokeWidth="4">
                  <path d="M2 18V2h16M36 20v16H20" />
                </svg>
              </RoundButton>
            </ChartTools>
          </Panel>
          <DateAxis>
            <span>2025/09/15</span>
            <EndDate>2026/08/06</EndDate>
          </DateAxis>
          <Panel>
            <TurnoverChart />
            <Indicator>
              <Dropdown label="成交指标" value="成交额" />
              <IndicatorValue $color="#d8383c">额:1.75亿</IndicatorValue>
              <IndicatorValue>M5:1.98亿</IndicatorValue>
              <IndicatorValue $color="#dfa01c">M10:2.04亿</IndicatorValue>
              <IndicatorValue $color="#45a5d8"><em>换手率:</em>3.04%</IndicatorValue>
            </Indicator>
          </Panel>
          <ClusterPanel>
            <ClusterChart />
            <Promo href="#cluster">
              <DragonLogo />
              <PromoTitle>主力抱团度</PromoTitle>
              <PromoNote>
                增强还是减弱？
                <svg width="10" height="18" viewBox="0 0 10 18"><path d="M0 0l10 9-10 9Z" fill="#555" /></svg>
              </PromoNote>
            </Promo>
            <Indicator>
              <Dropdown label="副图指标" value="主力抱团度" />
              <ClusterTitle>主力抱团度:--</ClusterTitle>
            </Indicator>
          </ClusterPanel>
        </div>

        <ChipColumn>
          <ChipChart />
          <ChipDetails>
            <ChipTabs>
              <ChipTab $active>全部筹码</ChipTab>
              <ChipTab>
                主力筹码
                <LockBadge><LockIcon /></LockBadge>
              </ChipTab>
            </ChipTabs>
            <Facts>
              <Fact $color="#dc2a3f"><dt>收盘获利</dt><dd>59.84%</dd></Fact>
              <Fact $color="#e8950f"><dt>平均成本</dt><dd>3.12</dd></Fact>
            </Facts>
            <Segment>
              {["90%筹码", "70%筹码"].map((name) => (
                <SegmentButton key={name} $active={name === range} onClick={() => setRange(name)}>{name}</SegmentButton>
              ))}
            </Segment>
            <Facts>
              <Fact><dt>价格区间</dt><dd>2.93 – 4.48</dd></Fact>
              <Fact><dt>集中度</dt><dd>20.92%</dd></Fact>
            </Facts>
            <ChipActions>
              <ChipAction $primary>
                <svg width="33" height="32" viewBox="0 0 33 32" stroke="#3c62d8" strokeWidth="4">
                  <path d="M0 2h17M0 9h25M0 16h33M0 23h25M0 30h17" />
                </svg>
                筹码选股
              </ChipAction>
              <ChipAction>关闭</ChipAction>
            </ChipActions>
          </ChipDetails>
        </ChipColumn>
      </Charts>
    </>
  );
};

export default App;
